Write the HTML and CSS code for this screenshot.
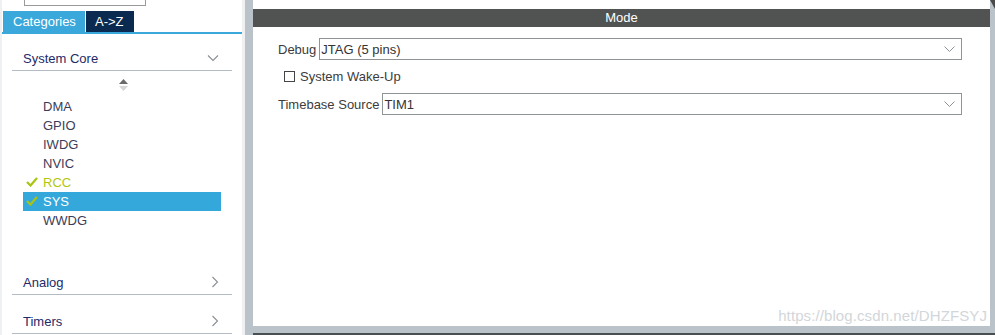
FILE: index.html
```html
<!DOCTYPE html>
<html lang="en">
<head>
  <meta charset="UTF-8">
  <title>SYS Mode and Configuration</title>
  <link rel="stylesheet" href="styles.css">
</head>
<body>
  <aside class="sidebar">
    <div class="search"></div>
    <div class="tabs">
      <div class="tab active">Categories</div>
      <div class="tab dark">A-&gt;Z</div>
    </div>

    <div class="cat open">
      <span>System Core</span>
      <svg class="chev" width="12" height="8" viewBox="0 0 12 8"><path d="M1 1.5 L6 6.5 L11 1.5" fill="none" stroke="#8a8f94" stroke-width="1.1"/></svg>
    </div>
    <div class="sorter">
      <svg width="9" height="12" viewBox="0 0 9 12"><path d="M4.5 0 L9 5 L0 5 Z" fill="#6b6b6b"/><path d="M0 7 L9 7 L4.5 12 Z" fill="#d6d6d6"/></svg>
    </div>
    <ul class="items">
      <li>DMA</li>
      <li>GPIO</li>
      <li>IWDG</li>
      <li>NVIC</li>
      <li class="ok"><svg class="tick" width="12" height="10" viewBox="0 0 12 10"><path d="M1 5 L4.5 8.5 L11 1" fill="none" stroke="#a9c411" stroke-width="2.2"/></svg>RCC</li>
      <li class="ok selected"><svg class="tick" width="12" height="10" viewBox="0 0 12 10"><path d="M1 5 L4.5 8.5 L11 1" fill="none" stroke="#a9c411" stroke-width="2.2"/></svg>SYS</li>
      <li>WWDG</li>
    </ul>

    <div class="cat analog">
      <span>Analog</span>
      <svg class="chev" width="8" height="12" viewBox="0 0 8 12"><path d="M1.5 1 L6.5 6 L1.5 11" fill="none" stroke="#8a8f94" stroke-width="1.1"/></svg>
    </div>
    <div class="cat timers">
      <span>Timers</span>
      <svg class="chev" width="8" height="12" viewBox="0 0 8 12"><path d="M1.5 1 L6.5 6 L1.5 11" fill="none" stroke="#8a8f94" stroke-width="1.1"/></svg>
    </div>
  </aside>

  <div class="splitter"></div>

  <main class="main">
    <div class="main-row">
      <section class="content">
        <div class="topgap"></div>
        <div class="bar">Mode</div>
        <div class="form">
          <div class="row">
            <label>Debug</label>
            <div class="select">JTAG (5 pins)
              <svg width="11" height="6" viewBox="0 0 11 6"><path d="M0.5 0.5 L5.5 5.5 L10.5 0.5" fill="none" stroke="#8d9296" stroke-width="1"/></svg>
            </div>
          </div>
          <div class="row check">
            <span class="box"></span>
            <span>System Wake-Up</span>
          </div>
          <div class="row">
            <label>Timebase Source</label>
            <div class="select">TIM1
              <svg width="11" height="6" viewBox="0 0 11 6"><path d="M0.5 0.5 L5.5 5.5 L10.5 0.5" fill="none" stroke="#8d9296" stroke-width="1"/></svg>
            </div>
          </div>
        </div>
        <div class="watermark">https://blog.csdn.net/DHZFSYJ</div>
      </section>
      <div class="scroll">
        <svg width="5" height="9" viewBox="0 0 5 9"><path d="M0 0 L5 0 L5 9 Z" fill="#4a4a4a"/></svg>
      </div>
    </div>
    <div class="bottom"></div>
  </main>
</body>
</html>
```

FILE: styles.css
```css
* { box-sizing: border-box; }
body { margin: 0; width: 995px; height: 335px; overflow: hidden; display: flex; font-family: "Liberation Sans", Arial, sans-serif; font-size: 13px; background: #fff; }

.sidebar { width: 245px; height: 335px; border-left: 2px solid #eef0f2; border-right: 3px solid #eef0f2; background: #fff; }
.search { margin-left: 22px; width: 122px; height: 6px; border: 1px solid #9a9a9a; border-top: none; }
.tabs { display: flex; gap: 1px; margin-top: 5px; padding-left: 1px; border-bottom: 2px solid #3aa8db; }
.tab { height: 21px; line-height: 21px; color: #fff; font-size: 13px; padding: 0 0 0 10px; white-space: nowrap; }
.tab.active { background: #3aa8db; width: 82px; }
.tab.dark { background: #0b2a50; width: 48px; padding-left: 9px; }

.cat { margin: 0 10px; height: 25px; padding: 0 13px 0 11px; display: flex; align-items: center; justify-content: space-between; border-bottom: 1px solid #b3bcc4; color: #242a68; font-size: 13px; }
.cat.open { margin-top: 12px; }
.cat.analog { margin-top: 40px; }
.cat.timers { margin-top: 14px; }

.sorter { height: 26px; display: flex; align-items: center; justify-content: center; padding-left: 3px; padding-top: 2px; }

.items { list-style: none; margin: 0 0 0 21px; padding: 0; width: 198px; }
.items li { height: 19px; line-height: 19px; padding-left: 20px; color: #3b3d58; position: relative; }
.items li.ok { color: #b3c60f; }
.items li.selected { background: #35a8db; color: #fff; }
.tick { position: absolute; left: 3px; top: 4px; }

.splitter { width: 8px; background: #b9c3c9; }

.main { flex: 1; display: flex; flex-direction: column; }
.main-row { flex: 1; display: flex; }
.content { flex: 1; position: relative; background: #fff; }
.topgap { height: 9px; }
.bar { height: 18px; line-height: 18px; background: #515352; color: #fff; text-align: center; font-size: 13px; }
.form { padding: 11px 28px 0 25px; }
.row { display: flex; align-items: center; height: 22px; color: #3c3c3c; }
.row label { margin-right: 3px; }
.select { flex: 1; height: 22px; border: 1px solid #8f9497; display: flex; align-items: center; justify-content: space-between; padding: 0 6px 0 1px; color: #333; }
.row.check { height: 33px; padding-left: 6px; }
.box { width: 11px; height: 11px; border: 1px solid #444; margin-right: 5px; }
.watermark { position: absolute; right: 3px; bottom: 2px; color: #d2d6d9; font-size: 15px; letter-spacing: 0.1px; }

.scroll { width: 5px; background: #b9c3c9; }
.scroll svg { display: block; }
.bottom { height: 9px; background: #b9c3c9; border-bottom: 2px solid #4a4f52; }
```
